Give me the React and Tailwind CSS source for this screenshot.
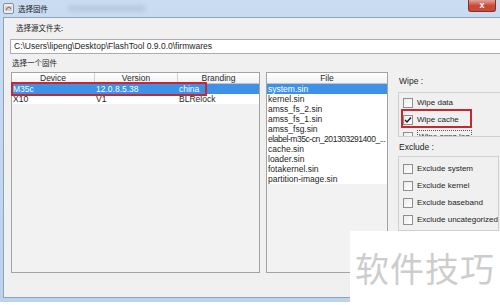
import React from "react";

const files = [
  "system.sin",
  "kernel.sin",
  "amss_fs_2.sin",
  "amss_fs_1.sin",
  "amss_fsg.sin",
  "elabel-m35c-cn_201303291400_...",
  "cache.sin",
  "loader.sin",
  "fotakernel.sin",
  "partition-image.sin",
];

const firmwares = [
  { device: "M35c", version: "12.0.8.5.38", branding: "china" },
  { device: "X10", version: "V1", branding: "BLRelock" },
];

const CheckBox = ({ label, checked, focus }) => (
  <div className="flex items-center h-[17px] pl-[4px] whitespace-nowrap">
    <div className="w-[10px] h-[10px] shrink-0 border border-[#8e8f8f] bg-gradient-to-br from-[#ececec] to-white flex items-center justify-center">
      {checked && (
        <svg width="8" height="8" viewBox="0 0 8 8">
          <path d="M1 4 L3 6 L7 1.5" stroke="#222" strokeWidth="1.5" fill="none" />
        </svg>
      )}
    </div>
    <span className={"ml-[4px] text-[8px] text-[#1e1e1e] leading-[11px] " + (focus ? "border border-dotted border-[#555] px-[1px]" : "")}>
      {label}
    </span>
  </div>
);

const HeaderCell = ({ children, className }) => (
  <div className={"h-full flex items-center justify-center text-[8.5px] text-[#2a2a2a] " + className}>
    {children}
  </div>
);

export default function App() {
  return (
    <div className="relative w-[500px] h-[305px] overflow-hidden bg-white font-['Liberation_Sans','Noto_Sans_CJK_SC',sans-serif]">
      <div className="h-[302px] flex flex-col bg-gradient-to-b from-[#c9dcf1] to-[#bcd3ec]">
        {/* title bar */}
        <div className="h-[17px] flex items-center relative">
          <svg className="ml-[3px]" width="11" height="11" viewBox="0 0 11 11">
            <rect x="0.5" y="0.5" width="10" height="10" rx="1.5" fill="#e9eef4" stroke="#7f8fa3" />
            <rect x="2" y="3" width="7" height="5" fill="#c9d3df" />
            <path d="M3 7 Q5.5 2 8 6" stroke="#d0601e" strokeWidth="1.2" fill="none" />
          </svg>
          <span className="ml-[4px] text-[7.5px] text-[#1a1a1a] leading-[12px] font-['Noto_Sans_CJK_SC',sans-serif]">选择固件</span>
          <div className="ml-[20px] w-[78px] h-[7px] bg-[#aebfd3] rounded-sm blur-[2px] opacity-60" />
          <div className="absolute right-[4px] top-0 w-[28px] h-[12px] rounded-b-[3px] bg-gradient-to-b from-[#e0a39a] via-[#c9493a] to-[#c64a3a] border border-[#8a2e24] border-t-0 flex items-center justify-center">
            <span className="text-white text-[9px] font-bold leading-none">x</span>
          </div>
        </div>

        {/* body */}
        <div className="flex-1 flex pl-[3px] pr-[3px] pb-[4px]">
          <div className="flex-1 border border-[#8ea3bd] bg-[#f0f0f0] flex flex-col">
            <div className="pt-[4px] pl-[12px] h-[17px] text-[7.5px] leading-[12px] text-[#1e1e1e] font-['Noto_Sans_CJK_SC',sans-serif]">选择源文件夹:</div>
            <div className="mt-[4px] ml-[6px] h-[15px] border border-[#abadb3] bg-white flex items-center pl-[3px] text-[8.5px] text-[#1e1e1e] whitespace-nowrap">
              C:\Users\lipeng\Desktop\FlashTool 0.9.0.0\firmwares
            </div>
            <div className="mt-[3px] pl-[8px] h-[12px] text-[7.5px] leading-[12px] text-[#1e1e1e] font-['Noto_Sans_CJK_SC',sans-serif]">选择一个固件</div>

            <div className="mt-[3px] ml-[7px] flex">
              {/* firmware table */}
              <div className="w-[249px] h-[201px] border border-[#a3a3a3] bg-[#f2f2f2] flex flex-col overflow-hidden">
                <div className="h-[11px] shrink-0 flex border-b border-[#c4c4c4] bg-gradient-to-b from-white to-[#f1f2f4]">
                  <HeaderCell className="w-[83px] border-r border-[#cfcfcf]">Device</HeaderCell>
                  <HeaderCell className="w-[83px] border-r border-[#cfcfcf]">Version</HeaderCell>
                  <HeaderCell className="flex-1">Branding</HeaderCell>
                </div>
                {firmwares.map((f, i) => (
                  <div
                    key={f.device}
                    className={"h-[10px] shrink-0 flex text-[8.5px] leading-[10px] whitespace-nowrap " + (i === 0 ? "bg-[#3d92e8] text-white" : "bg-white text-[#1e1e1e]")}
                  >
                    <div className="w-[83px] pl-[1px]">{f.device}</div>
                    <div className="w-[83px] pl-[1px]">{f.version}</div>
                    <div className="flex-1 pl-[1px]">{f.branding}</div>
                  </div>
                ))}
              </div>

              {/* file list */}
              <div className="ml-[6px] w-[122px] h-[201px] border border-[#a3a3a3] bg-[#f2f2f2] flex flex-col overflow-hidden">
                <div className="h-[11px] shrink-0 flex border-b border-[#c4c4c4] bg-gradient-to-b from-white to-[#f1f2f4]">
                  <HeaderCell className="flex-1">File</HeaderCell>
                </div>
                {files.map((name, i) => (
                  <div
                    key={name}
                    className={"h-[10px] shrink-0 pl-[1px] text-[8.5px] leading-[10px] whitespace-nowrap " + (i === 0 ? "bg-[#3d92e8] text-white " : "bg-white text-[#1e1e1e] ") + (i === 5 ? "tracking-[-0.45px]" : "")}
                  >
                    {name}
                  </div>
                ))}
              </div>

              {/* options */}
              <div className="ml-[10px] flex-1 flex flex-col">
                <div className="pt-[3px] pl-[1px] h-[15px] text-[8.5px] leading-[12px] text-[#1e1e1e]">Wipe :</div>
                <div className="mt-[5px] h-[45px] border border-[#d0d0d0] border-r-0 overflow-hidden pt-[1px]">
                  <CheckBox label="Wipe data" />
                  <CheckBox label="Wipe cache" checked />
                  <CheckBox label="Wipe apps log" focus />
                </div>
                <div className="mt-[4px] pl-[1px] h-[12px] text-[8.5px] leading-[12px] text-[#1e1e1e]">Exclude :</div>
                <div className="mt-[3px] mr-[2px] h-[75px] border border-[#d0d0d0] pt-[3px] overflow-hidden">
                  <CheckBox label="Exclude system" />
                  <CheckBox label="Exclude kernel" />
                  <CheckBox label="Exclude baseband" />
                  <CheckBox label="Exclude uncategorized" />
                </div>
              </div>
            </div>
          </div>
        </div>
      </div>

      {/* annotation boxes */}
      <div className="absolute left-[11px] top-[82px] w-[196px] h-[14px] border-2 border-[#c9262f]" />
      <div className="absolute left-[401px] top-[109px] w-[71px] h-[19px] border-2 border-[#c9262f]" />

      {/* watermark */}
      <div className="absolute left-[350px] top-[231px] w-[150px] h-[74px] bg-white flex items-center justify-center">
        <span className="text-[34px] leading-none text-[#cdcdcd] font-['Noto_Sans_CJK_SC',sans-serif] tracking-[1px]">软件技巧</span>
      </div>
    </div>
  );
}
